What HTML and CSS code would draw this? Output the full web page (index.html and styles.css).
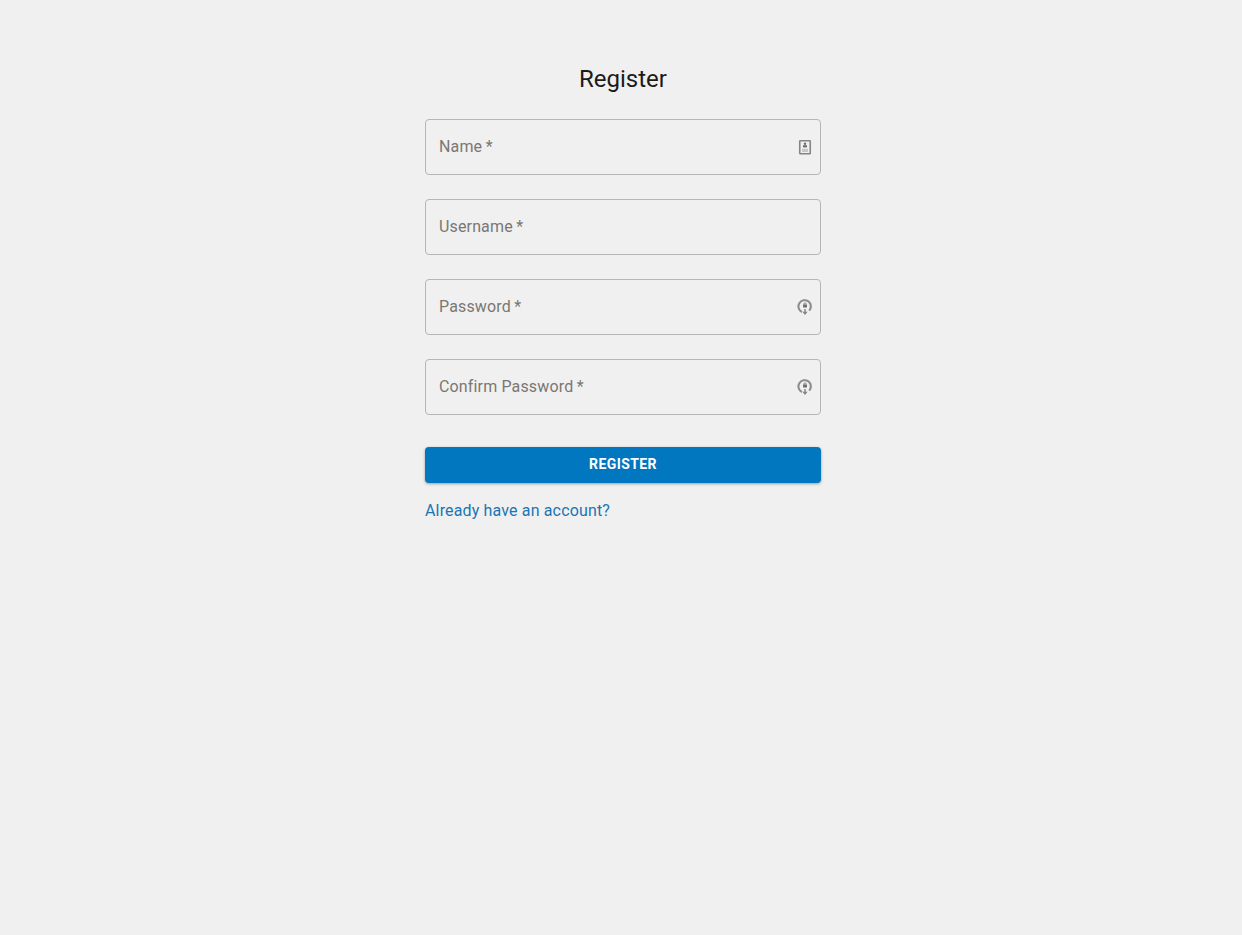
FILE: index.html
```html
<!DOCTYPE html>
<html lang="en">
<head>
<meta charset="utf-8">
<title>Register</title>
<link rel="stylesheet" href="styles.css">
</head>
<body>
<main class="page">
  <h1 class="title">Register</h1>
  <form class="form">
    <div class="field">
      <span class="label">Name&thinsp;*</span>
      <svg class="icon" viewBox="0 0 14 16" width="14" height="16" aria-hidden="true">
        <rect x="1.75" y="1.75" width="10.5" height="13" rx="0.6" fill="none" stroke="#858585" stroke-width="1.6"/>
        <circle cx="7" cy="4.8" r="1.2" fill="#6e6e6e"/>
        <rect x="5" y="6.2" width="4" height="2.2" fill="#6e6e6e"/>
        <rect x="4" y="9.8" width="6" height="3.2" fill="#c8c8c8"/>
      </svg>
    </div>
    <div class="field"><span class="label">Username&thinsp;*</span></div>
    <div class="field">
      <span class="label">Password&thinsp;*</span>
      <svg class="icon icon-ring" viewBox="0 0 16 18" width="16" height="18" aria-hidden="true">
        <path d="M5 14A6.2 6.2 0 1 1 12.2 12.6" fill="none" stroke="#8c8c8c" stroke-width="2.1"/>
        <path d="M6.9 6.8V6a1.1 1.1 0 0 1 2.2 0v.8" fill="none" stroke="#6e6e6e" stroke-width="0.8"/>
        <rect x="6" y="6.6" width="4" height="3" rx="0.6" fill="#6e6e6e"/>
        <rect x="7.1" y="11" width="1.8" height="3.4" fill="#9a9a9a"/>
        <path d="M5.4 13.8h5.2L8 17z" fill="#858585"/>
      </svg>
    </div>
    <div class="field">
      <span class="label">Confirm Password&thinsp;*</span>
      <svg class="icon icon-ring" viewBox="0 0 16 18" width="16" height="18" aria-hidden="true">
        <path d="M5 14A6.2 6.2 0 1 1 12.2 12.6" fill="none" stroke="#8c8c8c" stroke-width="2.1"/>
        <path d="M6.9 6.8V6a1.1 1.1 0 0 1 2.2 0v.8" fill="none" stroke="#6e6e6e" stroke-width="0.8"/>
        <rect x="6" y="6.6" width="4" height="3" rx="0.6" fill="#6e6e6e"/>
        <rect x="7.1" y="11" width="1.8" height="3.4" fill="#9a9a9a"/>
        <path d="M5.4 13.8h5.2L8 17z" fill="#858585"/>
      </svg>
    </div>
    <button class="submit" type="button">Register</button>
    <a class="link" href="#">Already have an account?</a>
  </form>
</main>
</body>
</html>
```
FILE: styles.css
```css
* { box-sizing: border-box; }
html, body { height: 100%; }
body {
  margin: 0;
  background: #f0f0f0;
  font-family: Roboto, "Liberation Sans", sans-serif;
  color: #1c1b1a;
}
.page {
  display: flex;
  flex-direction: column;
  align-items: center;
  padding: 63px 0 0 4px;
}
.title {
  margin: 0 0 24px;
  font-size: 24px;
  font-weight: 400;
  line-height: 32px;
  letter-spacing: 0;
  text-align: center;
}
.form {
  width: 396px;
  display: flex;
  flex-direction: column;
}
.field {
  height: 56px;
  margin-bottom: 24px;
  padding: 0 8px 0 13px;
  border: 1px solid #b5b5b5;
  border-radius: 4px;
  display: flex;
  align-items: center;
  justify-content: space-between;
}
.label {
  font-size: 16px;
  line-height: 24px;
  letter-spacing: 0.15px;
  color: #7a7773;
}
.icon {
  display: block;
  filter: blur(0.35px);
}
.icon-ring { margin-right: -1px; }
.submit {
  height: 36px;
  margin-top: 8px;
  padding: 0 0 2px;
  border: 0;
  border-radius: 4px;
  background: #0077bf;
  color: #fff;
  font-family: inherit;
  font-size: 14px;
  font-weight: 700;
  letter-spacing: 0.4px;
  line-height: 24px;
  text-transform: uppercase;
  box-shadow: 0 1px 3px rgba(0, 0, 0, 0.35);
}
.link {
  margin-top: 16px;
  font-size: 16px;
  line-height: 24px;
  letter-spacing: 0.15px;
  color: #1a75b5;
  text-decoration: none;
}
```
